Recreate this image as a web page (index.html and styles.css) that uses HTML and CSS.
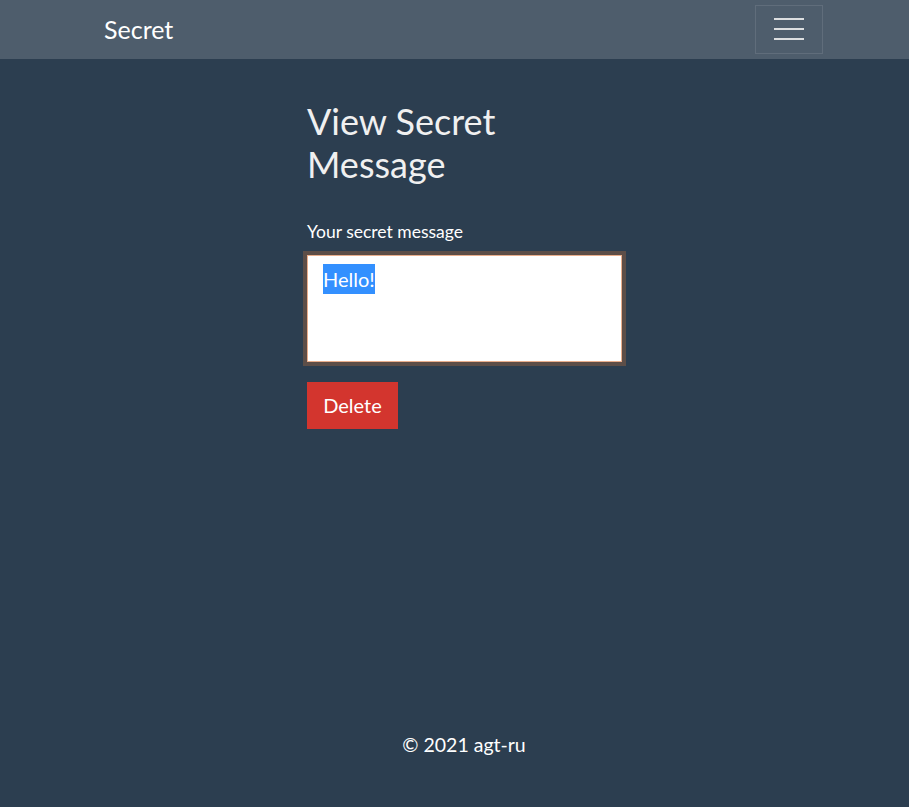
FILE: index.html
```html
<!DOCTYPE html>
<html lang="en">
<head>
<meta charset="utf-8">
<title>Secret</title>
<link rel="stylesheet" href="styles.css">
</head>
<body>
<div class="page">
  <nav class="navbar">
    <a class="brand" href="#">Secret</a>
    <button class="toggler" type="button" aria-label="Toggle navigation">
      <span class="bar"></span><span class="bar"></span><span class="bar"></span>
    </button>
  </nav>
  <main class="main">
    <div class="col">
      <h1 class="title">View Secret Message</h1>
      <label class="label">Your secret message</label>
      <div class="textarea" role="textbox"><span class="sel">Hello!</span></div>
      <button class="btn-danger" type="button">Delete</button>
    </div>
  </main>
  <footer class="footer">© 2021 agt-ru</footer>
</div>
</body>
</html>
```
FILE: styles.css
```css
* { box-sizing: border-box; }
html, body { margin: 0; padding: 0; }
body {
  background: #2c3e50;
  color: #ffffff;
  font-family: Lato, "Open Sans", sans-serif;
  font-size: 16px;
  line-height: 1.5;
}
.page {
  min-height: 100vh;
  display: flex;
  flex-direction: column;
}
.navbar {
  height: 59px;
  background: #4e5d6c;
  display: flex;
  align-items: center;
  justify-content: space-between;
  padding: 0 86px 0 104px;
}
.brand {
  color: #ffffff;
  text-decoration: none;
  font-size: 25px;
  line-height: 1.2;
  margin-top: -2px;
}
.toggler {
  width: 68px;
  height: 49px;
  margin-top: -1px;
  background: transparent;
  border: 1px solid rgba(255,255,255,0.1);
  border-radius: 0;
  display: flex;
  flex-direction: column;
  align-items: center;
  justify-content: center;
  gap: 8px;
  padding: 0;
}
.bar {
  display: block;
  width: 30px;
  height: 2px;
  background: #dcdee0;
}
.main { flex: 1; }
.col {
  width: 315px;
  margin-left: 307px;
  padding-top: 41px;
}
.title {
  margin: 0 0 34px;
  font-size: 36px;
  font-weight: 400;
  line-height: 1.2;
  color: #f0f0f0;
}
.label {
  display: block;
  font-size: 17.5px;
  line-height: 24px;
  margin-bottom: 10.5px;
  color: #ffffff;
}
.textarea {
  width: 315px;
  height: 107px;
  background: #ffffff;
  border: 1px solid #eaae8c;
  box-shadow: 0 0 0 4px #5d4e48;
  padding: 8px 15px;
  font-size: 20px;
  line-height: 30px;
  color: #222;
}
.sel {
  display: inline-block;
  background: #3390ff;
  color: #ffffff;
  line-height: 30px;
}
.btn-danger {
  display: block;
  margin-top: 20px;
  background: #d3352e;
  color: #ffffff;
  border: 1px solid #d3352e;
  border-radius: 0;
  font-family: inherit;
  font-size: 20px;
  line-height: 30px;
  padding: 7px 15px;
  height: 47px;
  width: 91px;
  text-align: center;
}
.footer {
  text-align: center;
  font-size: 19.5px;
  line-height: 30px;
  padding: 0 0 47px 19px;
  color: #ffffff;
}
```
